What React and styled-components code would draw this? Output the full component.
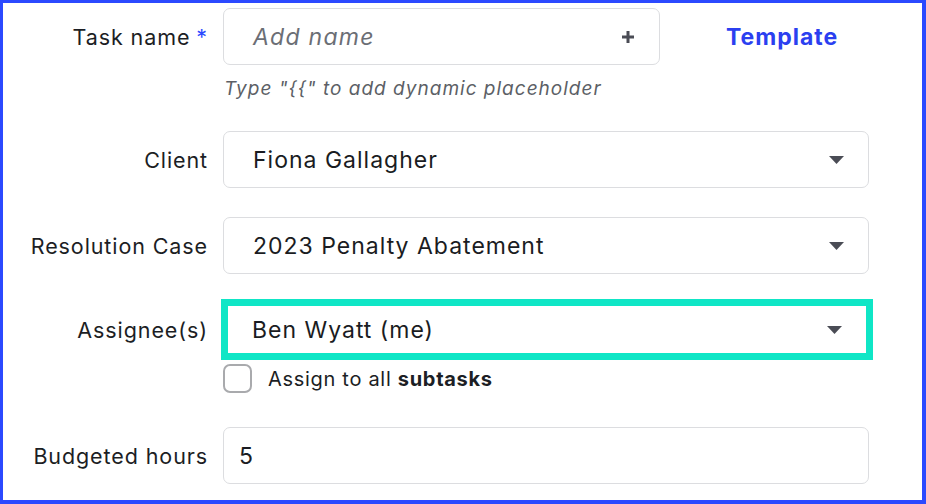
import React from 'react'
import styled, { createGlobalStyle } from 'styled-components'

const GlobalStyle = createGlobalStyle`
  html, body {
    margin: 0;
    padding: 0;
    background: #fff;
  }
  * {
    box-sizing: border-box;
  }
`

const Frame = styled.div`
  width: 926px;
  height: 504px;
  border: 3px solid #2b49ff;
  border-right-width: 4px;
  border-bottom-width: 4px;
  font-family: Inter, 'Noto Sans', sans-serif;
  color: #17191f;
  padding-top: 5px;
`

const Form = styled.div`
  display: grid;
  grid-template-columns: 205px 646px;
  column-gap: 15px;
  align-items: center;
`

const Label = styled.label`
  justify-self: end;
  font-size: 21.5px;
  letter-spacing: 0.9px;
  line-height: 26px;
  color: #1c1e24;
  margin-top: ${(p) => p.$top || 0}px;
`

const Required = styled.span`
  color: #2b49ff;
  margin-left: 6px;
`

const Field = styled.div`
  margin-top: ${(p) => p.$top || 0}px;
`

const NameRow = styled.div`
  display: flex;
  align-items: center;
`

const Box = styled.div`
  height: 57px;
  width: ${(p) => p.$width || '646px'};
  border: 1px solid #dcdde0;
  border-radius: 7px;
  display: flex;
  align-items: center;
  justify-content: space-between;
  padding: 0 24px 0 ${(p) => p.$padLeft || 29}px;
  font-size: 23px;
  letter-spacing: 1px;
  color: #1a1c22;
  background: #fff;
`

const Highlight = styled.div`
  margin-left: -2px;
  width: 652px;
  height: 61px;
  border: 7px solid #0fe6c6;
  display: flex;
  align-items: center;
  justify-content: space-between;
  padding: 0 24px 0 24px;
  font-size: 23px;
  letter-spacing: 1px;
  color: #1a1c22;
`

const Placeholder = styled.span`
  font-style: italic;
  letter-spacing: 1.25px;
  color: #6b6e75;
`

const TemplateLink = styled.a`
  margin-left: 66px;
  font-size: 23px;
  font-weight: 700;
  letter-spacing: 1px;
  color: #2b3ff0;
  text-decoration: none;
`

const Hint = styled.div`
  font-size: 19px;
  font-style: italic;
  letter-spacing: 1px;
  line-height: 24px;
  color: #5c5f66;
  margin-top: 12px;
  padding-left: 1px;
`

const CheckRow = styled.div`
  display: flex;
  align-items: center;
  gap: 16px;
  margin-top: 4px;
  font-size: 20px;
  letter-spacing: 0.7px;
  color: #1c1e24;
`

const Checkbox = styled.span`
  flex: none;
  width: 29px;
  height: 29px;
  border: 2px solid #a9aaad;
  border-radius: 7px;
  background: #fff;
`

const Caret = () => (
  <svg width="15" height="8" viewBox="0 0 15 8">
    <path d="M0 0h15L7.5 8z" fill="#4a4c55" />
  </svg>
)

const Plus = () => (
  <svg width="14" height="14" viewBox="0 0 14 14">
    <path d="M7 1v12M1 7h12" stroke="#4a4c55" strokeWidth="3" />
  </svg>
)

export default function App() {
  return (
    <>
      <GlobalStyle />
      <Frame>
        <Form>
          <Label>
            Task name<Required>*</Required>
          </Label>
          <Field>
            <NameRow>
              <Box $width="437px">
                <Placeholder>Add name</Placeholder>
                <Plus />
              </Box>
              <TemplateLink href="#">Template</TemplateLink>
            </NameRow>
          </Field>

          <span />
          <Hint>Type "{'{{'}" to add dynamic placeholder</Hint>

          <Label $top={30}>Client</Label>
          <Field $top={30}>
            <Box>
              Fiona Gallagher
              <Caret />
            </Box>
          </Field>

          <Label $top={29}>Resolution Case</Label>
          <Field $top={29}>
            <Box>
              2023 Penalty Abatement
              <Caret />
            </Box>
          </Field>

          <Label $top={25}>Assignee(s)</Label>
          <Field $top={25}>
            <Highlight>
              Ben Wyatt (me)
              <Caret />
            </Highlight>
          </Field>

          <span />
          <CheckRow>
            <Checkbox />
            <span>
              Assign to all <b>subtasks</b>
            </span>
          </CheckRow>

          <Label $top={34}>Budgeted hours</Label>
          <Field $top={34}>
            <Box $padLeft={15}>5</Box>
          </Field>
        </Form>
      </Frame>
    </>
  )
}
